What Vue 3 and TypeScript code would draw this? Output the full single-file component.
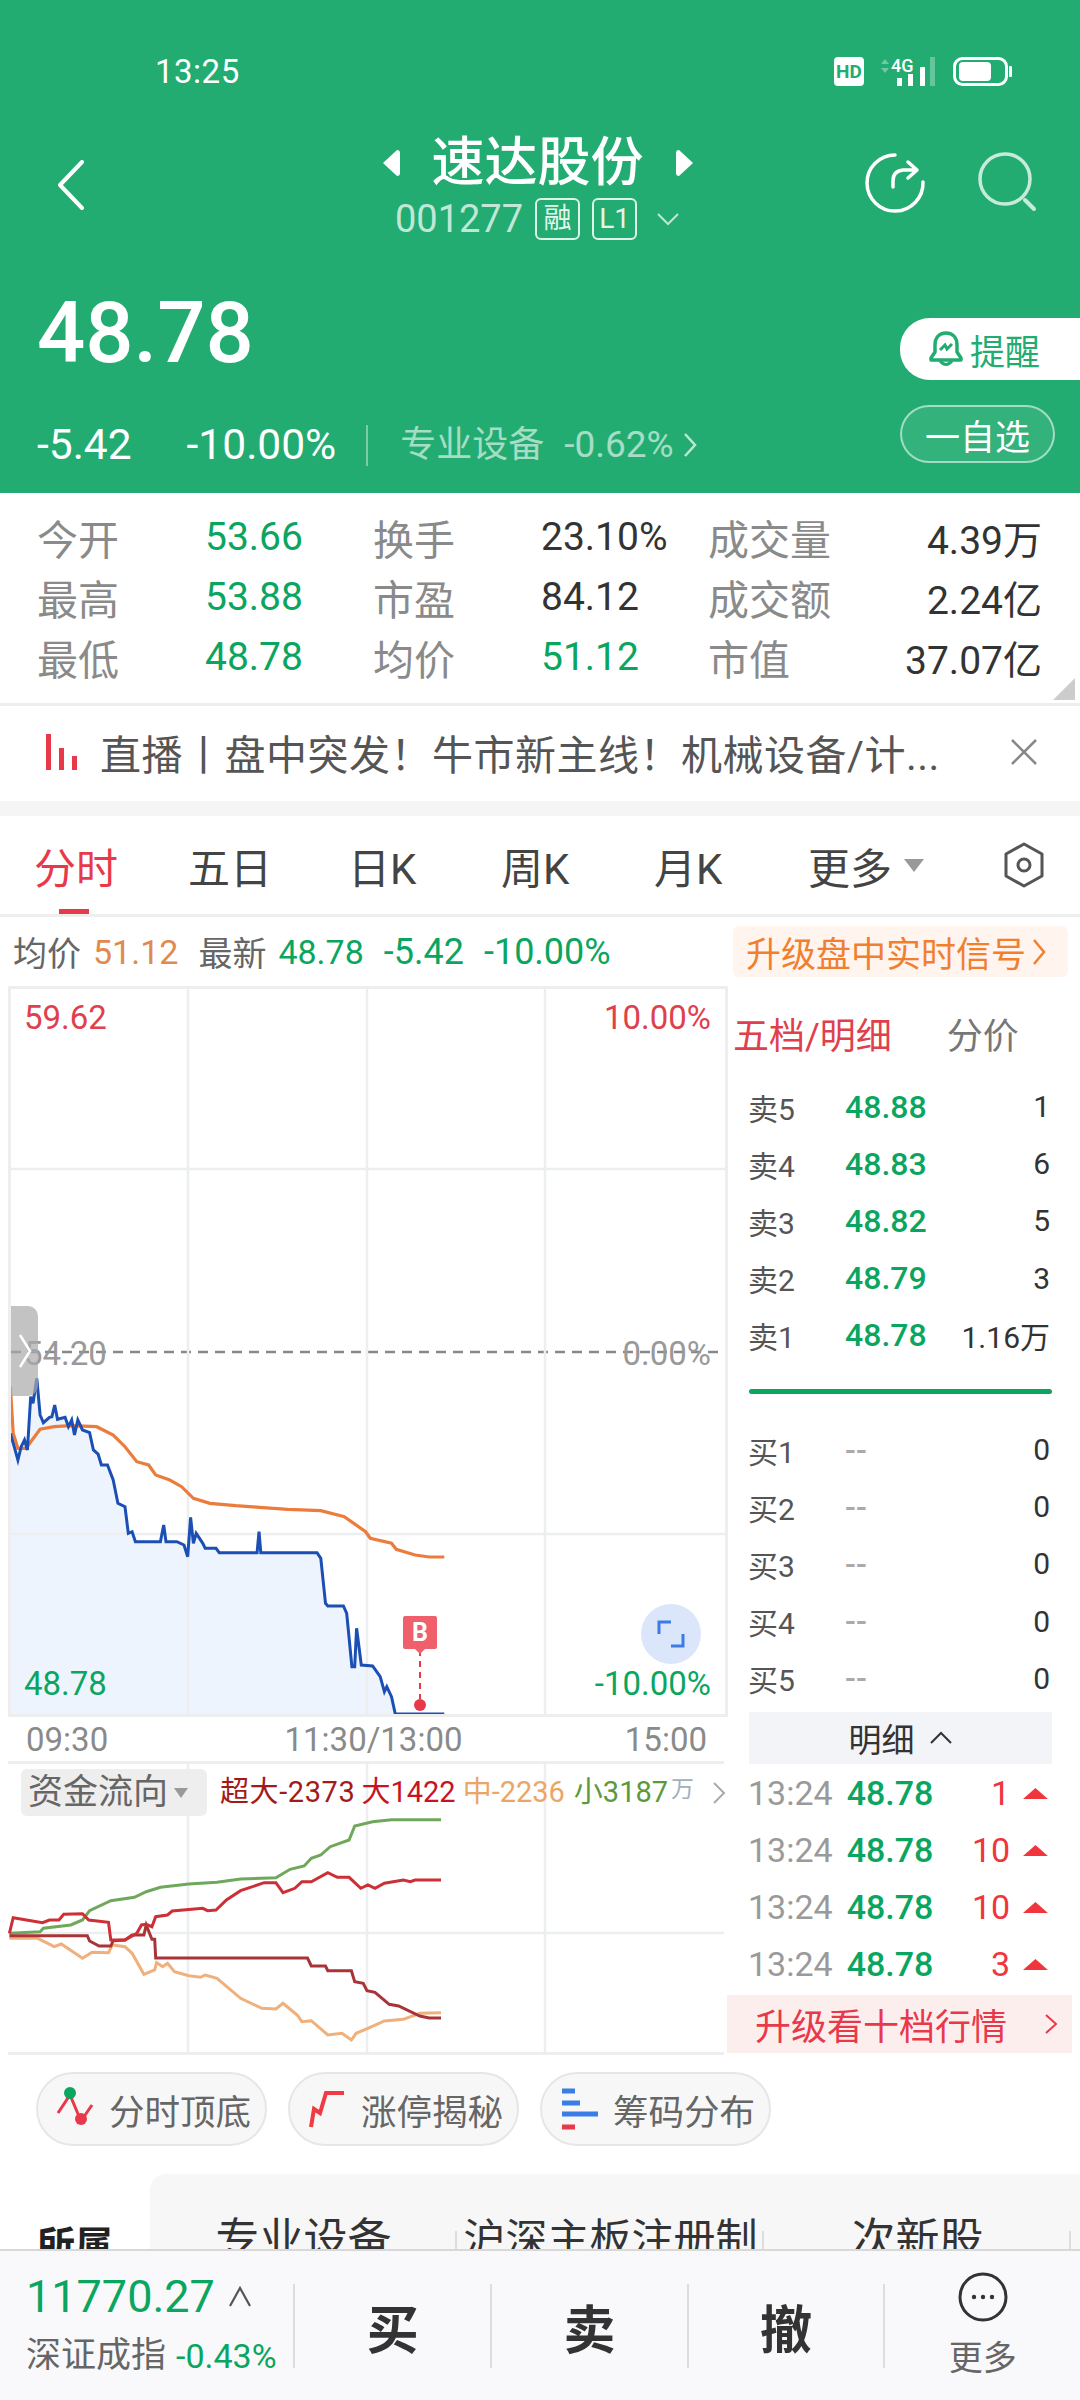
<script setup lang="ts">
type Pt = [number, number]

const flat = (a: number[]): Pt[] => {
  const o: Pt[] = []
  for (let i = 0; i < a.length; i += 2) o.push([a[i], a[i + 1]])
  return o
}
// traced from the reference; x/y are in a stretched trace space, mapped to chart pixels
const mapA = (p: Pt): Pt => [+(p[0] / 2.12 - 11).toFixed(1), +(p[1] / 3 + 1280 - 989).toFixed(1)]
const mapB = (p: Pt): Pt => [+(p[0] / 2.12 - 8).toFixed(1), +(p[1] / 3 + 1740 - 1764).toFixed(1)]
const str = (a: Pt[]) => a.map((p) => p.join(',')).join(' ')

const blue = flat([22,460,30,500,38,540,45,500,52,480,58,510,65,350,70,370,78,295,85,405,92,428,105,412,110,410,116,375,122,418,138,412,145,440,152,420,158,465,165,420,175,450,190,458,198,510,208,522,215,555,228,555,240,600,250,670,265,680,272,760,280,755,287,785,340,785,347,735,352,785,375,785,390,795,398,830,404,712,410,790,416,760,430,790,435,805,458,805,465,818,545,818,549,755,553,818,672,818,680,835,690,970,695,978,728,978,735,1000,746,1160,752,1160,756,1045,766,1155,790,1158,806,1190,815,1235,820,1220,830,1250,838,1302,942,1302]).map(mapA)
const avg = flat([22,320,28,460,38,505,55,505,68,480,85,448,115,440,150,437,205,440,240,465,265,500,290,545,315,555,330,585,360,600,385,620,410,655,445,670,500,677,550,682,610,688,680,692,730,710,775,755,785,775,830,790,840,808,880,825,910,831,942,831]).map(mapA)
const bluePts = str(blue)
const avgPts = str(avg)
const areaPts = str([[blue[0][0], 725], ...blue, [blue[blue.length - 1][0], 725]] as Pt[])

const flowGreen = str(flat([20,580,85,575,92,565,150,555,175,540,190,512,235,482,285,472,310,455,340,442,400,432,460,427,510,417,585,413,615,388,645,378,660,355,680,345,700,320,740,300,752,258,790,245,830,239,935,239]).map(mapB))
const flowRed = str(flat([20,580,28,533,90,548,105,540,125,540,135,523,175,521,188,540,230,547,235,600,265,600,290,580,300,555,310,553,322,560,330,530,355,525,365,513,430,505,440,512,458,510,480,480,510,452,560,428,585,428,600,458,625,445,640,425,660,425,695,398,715,412,740,412,765,445,780,435,795,445,815,430,855,420,870,425,880,420,935,420]).map(mapB))
const flowDark = str(flat([20,587,185,587,190,603,210,618,235,618,240,602,265,600,280,585,305,585,310,555,322,598,328,598,330,654,652,654,660,678,690,678,695,692,745,692,752,725,770,730,778,752,795,757,825,793,845,798,890,828,910,834,935,834]).map(mapB))
const flowOrange = str(flat([20,595,80,595,115,620,130,612,175,655,195,637,230,638,238,615,265,620,280,640,305,703,328,690,332,668,345,680,355,670,370,695,400,707,425,712,435,705,460,715,510,775,555,805,585,807,600,790,630,825,640,845,660,842,695,885,725,880,745,900,755,880,780,865,815,843,855,838,890,820,935,818]).map(mapB))

const stats = [
  { a: '今开', b: '53.66', bc: 'g', c: '换手', d: '23.10%', dc: '', e: '成交量', f: '4.39万' },
  { a: '最高', b: '53.88', bc: 'g', c: '市盈', d: '84.12', dc: '', e: '成交额', f: '2.24亿' },
  { a: '最低', b: '48.78', bc: 'g', c: '均价', d: '51.12', dc: 'g', e: '市值', f: '37.07亿' },
]
const tabs = [
  { t: '分时', w: 154, on: true },
  { t: '五日', w: 160 },
  { t: '日K', w: 153 },
  { t: '周K', w: 153 },
  { t: '月K', w: 154 },
]
const sells = [
  ['卖5', '48.88', '1'],
  ['卖4', '48.83', '6'],
  ['卖3', '48.82', '5'],
  ['卖2', '48.79', '3'],
  ['卖1', '48.78', '1.16万'],
]
const buys = ['买1', '买2', '买3', '买4', '买5']
const ticks = ['1', '10', '10', '3']
const hLines = [180, 545]
const vLines = [177, 356, 534]
const vLinesFlow = [180, 359, 537]
</script>

<template>
  <div class="page">
    <header class="head">
      <div class="status">
        <span class="clock">13:25</span>
        <svg class="sysicons" width="180" height="32" viewBox="0 0 180 32">
          <rect x="0" y="1" width="30" height="29" rx="4" fill="#fff" />
          <text x="15" y="22" text-anchor="middle" class="hd">HD</text>
          <path d="M47 8l4-5 4 5zM47 12l4 5 4-5z" fill="#fff" opacity=".35" />
          <text x="57" y="16" class="fourg">4G</text>
          <rect x="63" y="22" width="5" height="8" fill="#fff" />
          <rect x="74" y="18" width="5" height="12" fill="#fff" />
          <rect x="86" y="11" width="5" height="19" fill="#fff" />
          <rect x="96" y="1" width="5" height="29" fill="#fff" opacity=".3" />
          <rect x="120.5" y="2.5" width="52" height="26" rx="8" fill="none" stroke="#fff" stroke-width="3" />
          <rect x="125" y="6" width="32" height="19" rx="4" fill="#fff" />
          <rect x="175" y="10" width="3" height="11" rx="1" fill="#fff" />
        </svg>
      </div>
      <div class="nav">
        <svg class="back" width="28" height="50" viewBox="0 0 28 50">
          <path d="M25 2L3 25l22 23" fill="none" stroke="#fff" stroke-width="4" stroke-linecap="round" stroke-linejoin="round" />
        </svg>
        <div class="title-wrap">
          <div class="title">
            <svg width="19" height="28" viewBox="0 0 19 28"><path d="M1 14L15 1q3 0 3 3v20q0 3-3 3z" fill="#fff" /></svg>
            <span>速达股份</span>
            <svg width="19" height="28" viewBox="0 0 19 28"><path d="M18 14L4 1Q1 1 1 4v20q0 3 3 3z" fill="#fff" /></svg>
          </div>
          <div class="code">
            <span>001277</span>
            <b class="badge">融</b>
            <b class="badge">L1</b>
            <svg width="24" height="14" viewBox="0 0 24 14"><path d="M2 2l10 10L22 2" fill="none" stroke="#fff" stroke-opacity=".7" stroke-width="2" /></svg>
          </div>
        </div>
        <div class="nav-icons">
          <svg width="62" height="62" viewBox="0 0 62 62">
            <path d="M31 3A28 28 0 1 0 59 30" fill="none" stroke="#fff" stroke-width="3.5" stroke-linecap="round" />
            <path d="M29 35v-6q0-10 10-11h13M44 10l9 8-9 8" fill="none" stroke="#fff" stroke-width="3.5" stroke-linecap="round" stroke-linejoin="round" />
          </svg>
          <svg width="62" height="62" viewBox="0 0 62 62">
            <circle cx="27" cy="27" r="25" fill="none" stroke="#fff" stroke-opacity=".75" stroke-width="3.5" />
            <path d="M47 48l9 9" fill="none" stroke="#fff" stroke-opacity=".75" stroke-width="4" stroke-linecap="round" />
          </svg>
        </div>
      </div>
      <div class="quote">
        <div class="quote-l">
          <div class="price">48.78</div>
          <div class="chg">
            <span>-5.42</span>
            <span>-10.00%</span>
            <i class="vbar"></i>
            <span class="sector">专业设备</span>
            <span class="sector-v">-0.62%</span>
            <svg width="14" height="26" viewBox="0 0 14 26"><path d="M2 2l10 11L2 24" fill="none" stroke="#fff" stroke-opacity=".7" stroke-width="2.5" /></svg>
          </div>
        </div>
        <div class="quote-r">
          <div class="remind">
            <svg width="36" height="38" viewBox="0 0 36 38">
              <path d="M18 3c-7 0-11 5-11 12v7l-4 6v2h30v-2l-4-6v-7C29 8 25 3 18 3z" fill="none" stroke="#23ac71" stroke-width="3.5" stroke-linejoin="round" />
              <path d="M12 31q6 7 12 0M12 20l5-5 2 4 5-5" fill="none" stroke="#23ac71" stroke-width="3" />
            </svg>
            <span>提醒</span>
          </div>
          <div class="fav"><span>一自选</span></div>
        </div>
      </div>
    </header>

    <section class="stats">
      <div v-for="r in stats" :key="r.a" class="stat-row">
        <span class="lab c1">{{ r.a }}</span>
        <span class="val c2" :class="r.bc">{{ r.b }}</span>
        <span class="lab c3">{{ r.c }}</span>
        <span class="val c4" :class="r.dc">{{ r.d }}</span>
        <span class="lab c5">{{ r.e }}</span>
        <span class="val c6">{{ r.f }}</span>
      </div>
      <i class="corner"></i>
    </section>

    <section class="banner">
      <svg width="34" height="36" viewBox="0 0 34 36">
        <path d="M2 0h5v36H2z" fill="#e8394a" />
        <path d="M15 14h5v22h-5z" fill="#e8394a" />
        <path d="M28 22h5v14h-5z" fill="#e8394a" />
      </svg>
      <span class="banner-t">直播丨盘中突发！牛市新主线！机械设备/计...</span>
      <svg class="x" width="28" height="28" viewBox="0 0 28 28"><path d="M2 2l24 24M26 2L2 26" fill="none" stroke="#888" stroke-width="2.5" /></svg>
    </section>

    <nav class="tabs">
      <span v-for="t in tabs" :key="t.t" class="tab" :class="{ on: t.on }" :style="{ width: t.w + 'px' }">{{ t.t }}</span>
      <span class="more">更多<i class="tri"></i></span>
      <svg class="gear" width="42" height="46" viewBox="0 0 42 46">
        <path d="M21 2l18 10v22L21 44 3 34V12z" fill="none" stroke="#555" stroke-width="3" stroke-linejoin="round" />
        <circle cx="21" cy="23" r="6" fill="none" stroke="#555" stroke-width="3" />
      </svg>
    </nav>

    <div class="info">
      <span class="i-l">均价</span>
      <span class="i-o">51.12</span>
      <span class="i-l i-gap">最新</span>
      <span class="i-g">48.78</span>
      <span class="i-g i-gap i-big">-5.42</span>
      <span class="i-g i-gap i-big">-10.00%</span>
      <span class="signal">升级盘中实时信号<svg width="14" height="28" viewBox="0 0 14 28"><path d="M2 2l10 12L2 26" fill="none" stroke="#f08030" stroke-width="2.5" /></svg></span>
    </div>

    <section class="market">
      <div class="charts">
        <div class="plot">
          <svg class="canvas" width="714" height="725" viewBox="0 0 714 725">
            <polygon :points="areaPts" fill="#eef4fd" />
            <line v-for="y in hLines" :key="y" x1="0" x2="714" :y1="y" :y2="y" class="grid" />
            <line x1="0" x2="714" y1="363" y2="363" stroke="#888" stroke-width="2.5" stroke-dasharray="10 7" />
            <line v-for="x in vLines" :key="x" y1="0" y2="725" :x1="x" :x2="x" class="grid" />
            <polyline :points="avgPts" fill="none" stroke="#ec7c3c" stroke-width="3.2" />
            <polyline :points="bluePts" fill="none" stroke="#1b4fb3" stroke-width="3" />
            <line x1="409" x2="409" y1="661" y2="710" stroke="#e8394a" stroke-width="2" stroke-dasharray="6 5" />
            <circle cx="409" cy="716" r="6" fill="#e8394a" />
          </svg>
          <div class="handle">
            <svg width="14" height="36" viewBox="0 0 14 36"><path d="M2 2l10 16L2 34" fill="none" stroke="#fff" stroke-width="2.5" /></svg>
          </div>
          <span class="lb tl red">59.62</span>
          <span class="lb tr red">10.00%</span>
          <span class="lb ml grey">54.20</span>
          <span class="lb mr grey">0.00%</span>
          <span class="lb bl green">48.78</span>
          <span class="lb br green">-10.00%</span>
          <div class="bmark">B</div>
          <div class="expand">
            <svg width="28" height="28" viewBox="0 0 28 28"><path d="M2 14V2h12M26 14v12H14" fill="none" stroke="#3b7de6" stroke-width="3" /></svg>
          </div>
        </div>
        <div class="times"><span>09:30</span><span class="mid">11:30/13:00</span><span>15:00</span></div>
        <div class="flow">
          <svg class="canvas" width="716" height="288" viewBox="0 0 716 288">
            <line x1="0" x2="716" y1="169" y2="169" class="grid" />
            <line v-for="x in vLinesFlow" :key="'f' + x" y1="0" y2="288" :x1="x" :x2="x" class="grid" />
            <polyline :points="flowGreen" fill="none" stroke="#6fa85a" stroke-width="3" />
            <polyline :points="flowOrange" fill="none" stroke="#efb07c" stroke-width="3" />
            <polyline :points="flowDark" fill="none" stroke="#a83438" stroke-width="3" />
            <polyline :points="flowRed" fill="none" stroke="#cc3036" stroke-width="3" />
          </svg>
          <div class="flow-head">
            <span class="flow-chip">资金流向<i class="tri small"></i></span>
            <span class="f1">超大-2373</span>
            <span class="f2">大1422</span>
            <span class="f3">中-2236</span>
            <span class="f4">小3187</span>
            <span class="f5">万</span>
            <svg width="14" height="24" viewBox="0 0 14 24"><path d="M2 2l10 10L2 22" fill="none" stroke="#aaa" stroke-width="2" /></svg>
          </div>
        </div>
      </div>

      <aside class="book">
        <div class="book-head"><span class="bh-on">五档/明细</span><span class="bh-off">分价</span></div>
        <div class="levels sell">
          <div v-for="s in sells" :key="s[0]" class="lv">
            <span class="lv-l">{{ s[0] }}</span><span class="lv-p">{{ s[1] }}</span><span class="lv-q">{{ s[2] }}</span>
          </div>
        </div>
        <div class="bar"></div>
        <div class="levels buy">
          <div v-for="s in buys" :key="s" class="lv">
            <span class="lv-l">{{ s }}</span><span class="lv-p dash">--</span><span class="lv-q">0</span>
          </div>
        </div>
        <div class="detail">明细
          <svg width="24" height="14" viewBox="0 0 24 14"><path d="M2 12L12 2l10 10" fill="none" stroke="#333" stroke-width="2" /></svg>
        </div>
        <div class="ticks">
          <div v-for="(q, i) in ticks" :key="i" class="tick">
            <span class="tk-t">13:24</span><span class="tk-p">48.78</span><span class="tk-q">{{ q }}</span>
            <svg width="25" height="12" viewBox="0 0 25 12"><path d="M0 12L12.5 1 25 12z" fill="#f0363c" /></svg>
          </div>
        </div>
        <div class="upgrade">
          <span>升级看十档行情</span>
          <svg width="14" height="22" viewBox="0 0 14 22"><path d="M2 2l10 9L2 20" fill="none" stroke="#e8394a" stroke-width="2" /></svg>
        </div>
      </aside>
    </section>

    <section class="chips">
      <span class="chip">
        <svg width="38" height="48" viewBox="0 0 38 48">
          <path d="M2 28L14 10l11 26L36 20" fill="none" stroke="#e8394a" stroke-width="3" />
          <circle cx="14" cy="8" r="6" fill="#0aa55f" /><circle cx="25" cy="34" r="6" fill="#e8394a" />
        </svg>
        分时顶底
      </span>
      <span class="chip">
        <svg width="38" height="48" viewBox="0 0 38 48">
          <path d="M3 42l3-18 6 4 6-20h18" fill="none" stroke="#f03a44" stroke-width="4" />
        </svg>
        涨停揭秘
      </span>
      <span class="chip">
        <svg width="38" height="48" viewBox="0 0 38 48">
          <path d="M2 6h13" stroke="#3b7de6" stroke-width="5" />
          <path d="M2 18h18" stroke="#3b7de6" stroke-width="5" />
          <path d="M2 29h36" stroke="#3b7de6" stroke-width="5" />
          <path d="M2 42h13" stroke="#e8394a" stroke-width="5" />
        </svg>
        筹码分布
      </span>
    </section>

    <section class="concept">
      <b class="c-title">所属</b>
      <div class="c-panel">
        <span class="cell">专业设备</span>
        <span class="cell c-b">沪深主板注册制</span>
        <span class="cell">次新股</span>
      </div>
    </section>

    <footer class="foot">
      <div class="idx">
        <div class="idx-a">11770.27
          <svg width="24" height="22" viewBox="0 0 24 22"><path d="M2 20L12 2l10 18" fill="none" stroke="#555" stroke-width="2.2" /></svg>
        </div>
        <div class="idx-b"><span>深证成指</span><em>-0.43%</em></div>
      </div>
      <div class="act">买</div>
      <div class="act">卖</div>
      <div class="act">撤</div>
      <div class="act more-act">
        <svg width="50" height="50" viewBox="0 0 50 50">
          <circle cx="25" cy="25" r="23" fill="none" stroke="#333" stroke-width="3" />
          <circle cx="16" cy="25" r="2.2" fill="#333" /><circle cx="25" cy="25" r="2.2" fill="#333" /><circle cx="34" cy="25" r="2.2" fill="#333" />
        </svg>
        <span>更多</span>
      </div>
    </footer>
  </div>
</template>

<style scoped>
.page {
  width: 1080px;
  height: 2400px;
  overflow: hidden;
  background: #fff;
  font-family: Roboto, "Noto Sans CJK SC", sans-serif;
  color: #333;
  display: flex;
  flex-direction: column;
}
i { display: block; font-style: normal; }
.g { color: #0aa55f; }

/* header */
.head { height: 493px; background: #23ac71; color: #fff; flex: none; }
.status { height: 87px; padding: 57px 66px 0 155px; box-sizing: border-box; display: flex; justify-content: space-between; align-items: center; }
.clock { font-size: 33px; line-height: 30px; letter-spacing: .5px; }
.sysicons { flex: none; }
.hd { font: 700 19px "Liberation Sans Narrow", Roboto, sans-serif; fill: #23ac71; }
.fourg { font: 500 18px Roboto, sans-serif; fill: #fff; }
.nav { display: grid; grid-template-columns: 1fr auto 1fr; align-items: start; padding: 45px 40px 0 57px; height: 166px; box-sizing: border-box; }
.back { margin-top: 28px; }
.title-wrap { display: flex; flex-direction: column; align-items: center; transform: translateX(-11px); }
.title { display: flex; align-items: center; gap: 31px; font-size: 53px; line-height: 62px; font-weight: 500; }
.code { display: flex; align-items: center; gap: 12px; margin-top: 3px; font-size: 38px; line-height: 44px; color: rgba(255,255,255,.72); }
.badge { font-weight: 400; box-sizing: border-box; width: 45px; height: 42px; border: 2px solid rgba(255,255,255,.85); border-radius: 6px; display: flex; align-items: center; justify-content: center; font-size: 28px; color: rgba(255,255,255,.9); }
.code svg { margin-left: 7px; }
.nav-icons { justify-self: end; display: flex; gap: 52px; margin-top: 20px; }
.quote { display: flex; justify-content: space-between; padding: 35px 0 0 37px; }
.price { font-size: 85px; line-height: 90px; font-weight: 500; }
.chg { display: flex; align-items: center; margin-top: 45px; font-size: 42.5px; line-height: 44px; }
.chg span:nth-child(2) { margin-left: 55px; }
.vbar { width: 2px; height: 41px; background: rgba(255,255,255,.4); margin: 0 32px 0 30px; }
.sector { font-size: 36px; color: rgba(255,255,255,.6); }
.sector-v { font-size: 37px; margin: 0 9px 0 20px; color: rgba(255,255,255,.6); }
.quote-r { display: flex; flex-direction: column; align-items: flex-start; padding-top: 30px; width: 180px; }
.remind { width: 180px; height: 62px; background: #fff; border-radius: 30px 0 0 30px; display: flex; align-items: center; gap: 6px; padding-left: 28px; box-sizing: border-box; color: #23ac71; font-size: 35px; }
.fav { margin-top: 25px; width: 155px; height: 58px; box-sizing: border-box; border: 2px solid rgba(255,255,255,.55); background: rgba(255,255,255,.08); border-radius: 29px; display: flex; align-items: center; justify-content: center; font-size: 35px; }

/* stats */
.stats { position: relative; height: 213px; flex: none; padding-top: 14px; box-sizing: border-box; border-bottom: 3px solid #eee; }
.stat-row { display: flex; height: 60px; align-items: center; font-size: 39px; }
.lab { color: #8a8a8a; font-size: 41px; }
.val { color: #333; }
.val.g { color: #0aa55f; }
.c1 { margin-left: 37px; width: 168px; }
.c2 { width: 168px; }
.c3 { width: 168px; }
.c4 { width: 167px; }
.c5 { width: 190px; }
.c6 { width: 144px; text-align: right; white-space: nowrap; }
.corner { position: absolute; right: 5px; bottom: 3px; width: 22px; height: 22px; background: #ccc; clip-path: polygon(100% 0, 100% 100%, 0 100%); }

/* banner */
.banner { flex: none; display: flex; align-items: center; padding: 0 0 3px 44px; box-sizing: border-box; border-bottom: 15px solid #f5f5f5; height: 110px; }
.banner-t { margin-left: 22px; font-size: 41px; letter-spacing: .5px; color: #555; white-space: nowrap; width: 910px; }
.x { margin-left: 0; }

/* tabs */
.tabs { height: 101px; flex: none; box-sizing: border-box; border-bottom: 3px solid #eee; display: flex; align-items: center; padding-left: 34px; font-size: 42px; color: #444; position: relative; }
.tab { flex: none; position: relative; height: 100%; display: flex; align-items: center; }
.tab.on { color: #e8394a; }
.tab.on::after { content: ""; position: absolute; left: 25px; bottom: 0; width: 30px; height: 5px; background: #e8394a; }
.more { display: flex; align-items: center; gap: 12px; }
.tri { width: 0; height: 0; border-left: 10px solid transparent; border-right: 10px solid transparent; border-top: 13px solid #999; }
.tri.small { border-left-width: 7px; border-right-width: 7px; border-top-width: 10px; }
.gear { margin-left: 79px; }

/* info row */
.info { height: 69px; flex: none; display: flex; align-items: center; padding-left: 13px; font-size: 34px; box-sizing: border-box; }
.i-l { color: #666; }
.i-o { color: #e08a50; margin-left: 12px; }
.i-g { color: #0aa55f; margin-left: 12px; }
.i-gap { margin-left: 20px; }
.i-big { font-size: 36px; }
.signal { margin-left: auto; margin-right: 12px; width: 335px; height: 51px; box-sizing: border-box; padding-left: 13px; background: #fff5ee; border-radius: 6px; color: #f08030; display: flex; align-items: center; gap: 6px; font-size: 35px; white-space: nowrap; }

/* chart block */
.market { display: flex; flex: none; height: 1069px; }
.charts { width: 718px; margin-left: 9px; flex: none; }
.plot { position: relative; width: 714px; height: 725px; border: 3px solid #eee; margin: 0 0 0 -1px; }
.canvas { display: block; }
.plot .canvas { position: absolute; left: 0; top: 0; }
.grid { stroke: #eceef0; stroke-width: 2.5; }
.lb { position: absolute; font-size: 33px; line-height: 36px; }
.red { color: #e0404c; }
.grey { color: #999; }
.green { color: #0aa55f; }
.tl { left: 13px; top: 11px; }
.tr { right: 14px; top: 11px; }
.ml { left: 13px; top: 347px; }
.mr { right: 14px; top: 347px; }
.bl { left: 13px; bottom: 12px; }
.br { right: 14px; bottom: 12px; }
.handle { position: absolute; z-index: 1; left: 0; top: 317px; width: 27px; height: 90px; background: rgba(170,170,170,.7); border-radius: 0 10px 10px 0; display: flex; align-items: center; justify-content: center; }
.bmark { position: absolute; left: 392px; top: 627px; width: 34px; height: 33px; background: #ef5f6c; color: #fff; font-size: 25px; font-weight: 700; display: flex; align-items: center; justify-content: center; border-radius: 2px; }
.bmark::after { content: ""; position: absolute; left: 11px; bottom: -5px; border-left: 6px solid transparent; border-right: 6px solid transparent; border-top: 6px solid #ef5f6c; }
.expand { position: absolute; left: 630px; top: 615px; width: 60px; height: 60px; border-radius: 50%; background: #dce6fb; display: flex; align-items: center; justify-content: center; }
.times { height: 44px; display: flex; justify-content: space-between; align-items: center; padding: 0 20px 0 17px; font-size: 33px; color: #8a8a8a; }
.mid { margin-left: 14px; }
.flow { position: relative; width: 716px; height: 288px; border-top: 3px solid #eee; border-bottom: 3px solid #eee; margin-left: -1px; }
.flow-head { position: absolute; left: 13px; top: 5px; display: flex; align-items: center; font-size: 29px; white-space: nowrap; line-height: 47px; }
.flow-chip { width: 186px; height: 47px; box-sizing: border-box; background: #eee; border-radius: 6px; color: #666; font-size: 35px; display: flex; align-items: center; padding-left: 7px; gap: 6px; margin-right: 13px; }
.f1 { color: #a31a1a; letter-spacing: .6px; }
.f2 { color: #c8141e; margin-left: 6px; }
.f3 { color: #eba667; margin-left: 7px; }
.f4 { color: #5a9a3c; margin-left: 9px; }
.f5 { color: #9fb0bd; font-size: 23px; margin: -6px 18px 0 3px; }

/* order book */
.book { width: 353px; flex: none; position: relative; }
.book-head { height: 78px; padding: 16px 0 0 6px; box-sizing: border-box; display: flex; align-items: center; font-size: 36px; }
.bh-on { color: #e0404c; }
.bh-off { color: #777; margin-left: 55px; }
.levels { padding: 0 30px 0 21px; }
.sell { margin-top: 14px; }
.buy { margin-top: 0; }
.lv { height: 57.2px; display: flex; align-items: center; font-size: 30px; color: #555; }
.lv-l { width: 97px; }
.lv-p { color: #0aa55f; font-weight: 500; width: 100px; font-size: 32px; }
.dash { color: #aaa; }
.lv-q { flex: 1; text-align: right; color: #333; white-space: nowrap; }
.bar { height: 5px; width: 303px; margin: 25px 0 27px 22px; background: #0aa55f; border-radius: 3px; }
.detail { width: 303px; height: 52px; margin: 5px 0 0 22px; background: #f3f4f8; display: flex; align-items: center; justify-content: center; gap: 14px; font-size: 33px; color: #333; }
.ticks { padding: 0 32px 0 21px; margin-top: 0; }
.tick { height: 57.3px; display: flex; align-items: center; font-size: 34px; }
.tk-t { width: 99px; color: #9a9a9a; }
.tk-p { width: 91px; color: #0aa55f; font-weight: 500; }
.tk-q { width: 73px; text-align: right; color: #f0363c; margin-right: 13px; }
.upgrade { position: absolute; left: 0; top: 1009px; width: 345px; height: 58px; background: #fdeeee; color: #e8394a; font-size: 36px; display: flex; align-items: center; padding-left: 28px; box-sizing: border-box; gap: 37px; }

/* chips */
.chips { flex: none; height: 119px; padding-top: 17px; box-sizing: border-box; padding-left: 36px; display: flex; gap: 21px; }
.chip { width: 231px; height: 74px; box-sizing: border-box; background: #f7f7f7; border: 2px solid #e6e6e6; border-radius: 37px; display: flex; align-items: center; padding-left: 18px; gap: 15px; font-size: 35.5px; color: #666; white-space: nowrap; }

/* concept */
.concept { flex: none; height: 75px; overflow: hidden; display: flex; }
.c-title { margin: 46px 0 0 37px; font-size: 38px; font-weight: 700; color: #222; width: 113px; flex: none; line-height: 50px; }
.c-panel { flex: 1; background: #f7f7f7; border-radius: 16px 0 0 0; position: relative; font-size: 44px; color: #333; padding-top: 41px; display: flex; line-height: 50px; white-space: nowrap; }
.cell { flex: none; width: 307px; text-align: center; position: relative; }
.cell::after { content: ""; position: absolute; right: 0; top: 16px; width: 2px; height: 40px; background: #ddd; }
.c-b { font-size: 42px; }

/* footer */
.foot { flex: none; height: 151px; background: #f9f9fb; border-top: 2px solid #d8d8d8; box-sizing: border-box; display: flex; align-items: flex-start; }
.idx { width: 294px; padding: 20px 0 0 26px; box-sizing: border-box; }
.idx-a { display: flex; align-items: center; gap: 13px; font-size: 45px; line-height: 52px; color: #0aa55f; }
.idx-b { display: flex; align-items: center; font-size: 35px; color: #666; margin-top: 9px; line-height: 48px; white-space: nowrap; }
.idx-b em { font-style: normal; color: #0aa55f; font-size: 34px; margin-left: 10px; }
.act { width: 197px; height: 84px; margin-top: 33px; border-left: 2px solid #ddd; box-sizing: border-box; display: flex; align-items: center; justify-content: center; font-size: 52px; font-weight: 700; color: #333; }
.more-act { flex-direction: column; font-size: 34px; font-weight: 400; color: #666; gap: 14px; }
.more-act svg { flex: none; }
.more-act span { line-height: 44px; flex: none; }
</style>
